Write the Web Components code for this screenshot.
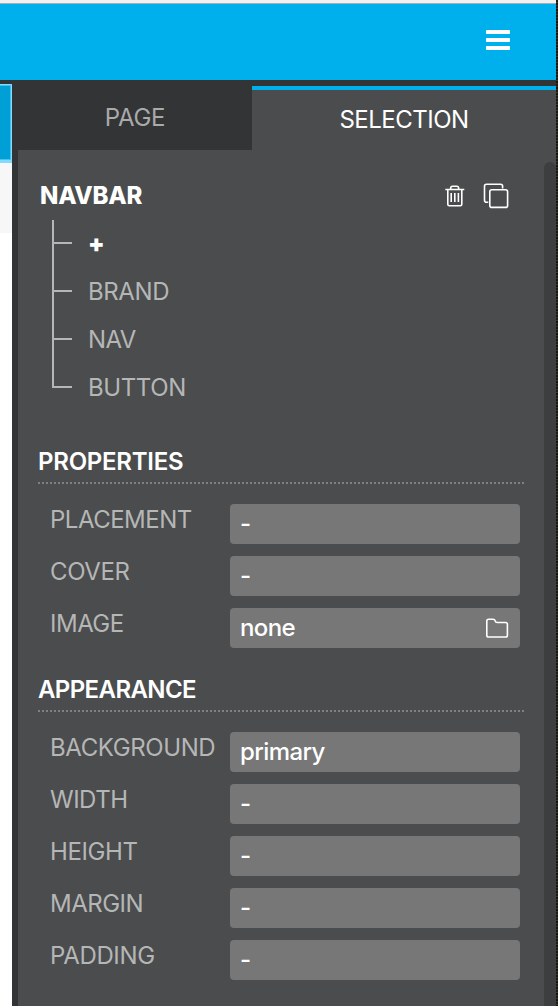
<!DOCTYPE html>
<html lang="en">
<head>
<meta charset="utf-8">
<title>Page editor</title>
<style>
html,body{margin:0;height:100%;overflow:hidden;background:#333}
body{font:24px/32px Inter,"Liberation Sans",sans-serif;color:#fff}
</style>
</head>
<body>
<editor-window>
  <top-bar slot="top"></top-bar>
  <page-canvas slot="canvas"></page-canvas>
  <inspector-panel slot="panel">
    <panel-tab slot="tabs" style="--ls:-.3px">PAGE</panel-tab>
    <panel-tab slot="tabs" active style="--ls:-.5px">SELECTION</panel-tab>
    <node-tree label="NAVBAR">
      <tree-item add>+</tree-item>
      <tree-item style="--ls:-.4px">BRAND</tree-item>
      <tree-item style="--ls:-.6px">NAV</tree-item>
      <tree-item style="--ls:-.4px">BUTTON</tree-item>
    </node-tree>
    <prop-group label="PROPERTIES" style="--hs:-.25px;--ls:-.5px">
      <prop-row label="PLACEMENT">-</prop-row>
      <prop-row label="COVER" style="--ls:-.4px">-</prop-row>
      <prop-row label="IMAGE" browse>none</prop-row>
    </prop-group>
    <prop-group label="APPEARANCE" style="--hs:-.6px;--ls:-.5px">
      <prop-row label="BACKGROUND" style="--ls:-.4px">primary</prop-row>
      <prop-row label="WIDTH">-</prop-row>
      <prop-row label="HEIGHT" style="--ls:-.4px">-</prop-row>
      <prop-row label="MARGIN">-</prop-row>
      <prop-row label="PADDING" style="--ls:-.35px">-</prop-row>
    </prop-group>
  </inspector-panel>
</editor-window>
<script>
const define = (name, html) => customElements.define(name, class extends HTMLElement {
  constructor() {
    super();
    this.attachShadow({mode: "open"}).innerHTML = html(this);
  }
});

define("editor-window", () => `<style>
:host{display:grid;grid-template:80px 926px / 556px 2px;height:1006px;width:558px;background:#333435}
.work{display:grid;grid-template-columns:12px 538px;column-gap:6px}
.edge{grid-row:1 / 3;grid-column:2;background:repeating-linear-gradient(#1c1c17 0 2px,#393820 2px 3px,#151613 3px 5px,#33331f 5px 6px)}
</style><slot name="top"></slot><div class="work"><slot name="canvas"></slot><slot name="panel"></slot></div><div class="edge"></div>`);

define("top-bar", () => `<style>
:host{display:flex;box-sizing:border-box;height:80px;background:#00b0ec;border-top:3px solid #f1f1f1;box-shadow:inset 0 1px #a5b0b4;justify-content:flex-end;padding:27px 46px 0 0}
svg{display:block}
</style><svg width="24" height="20" fill="#fff"><rect width="24" height="4" rx=".7"/><rect y="8" width="24" height="4" rx=".7"/><rect y="16" width="24" height="4" rx=".7"/></svg>`);

define("page-canvas", () => `<style>
:host{display:flex;flex-direction:column;padding-top:4px}
.sel{height:79px;box-sizing:border-box;background:#009fd6;border:solid #82dafc;border-width:1px 1px 3px 0;box-shadow:inset -1px 0 #47c2ee,inset 0 1px #47c2ee,inset 0 -1px #47c2ee}
.sub{height:70px;background:#f7f7f7}
.rest{flex:1;background:#fff}
</style><div class="sel"></div><div class="sub"></div><div class="rest"></div>`);

define("inspector-panel", () => `<style>
:host{display:flex;flex-direction:column;background:#4b4c4d}
.tabs{display:grid;grid-template-columns:234px 304px;height:70px;background:#333436}
.body{display:grid;grid-template-columns:526px 12px;flex:1}
.content{padding:26px 20px 0}
.bar{margin-top:12px;background:#3d3e40;border-radius:6px 6px 0 0}
</style><div class="tabs"><slot name="tabs"></slot></div><div class="body"><div class="content"><slot></slot></div><div class="bar"></div></div>`);

define("panel-tab", () => `<style>
:host{display:block;box-sizing:border-box;text-align:center;color:#a9aaaa;padding-top:22px;letter-spacing:var(--ls)}
:host([active]){margin-top:6px;border-top:4px solid #00b0ec;background:#4b4c4d;color:#fff;padding-top:14px}
</style><slot></slot>`);

define("node-tree", el => `<style>
:host{display:block;height:268px}
.head{display:flex;align-items:center;padding:4px 15px 0 2px;height:32px}
b{flex:1;font-weight:800;letter-spacing:-.25px}
svg{display:block;fill:none;stroke:#fff}
.trash{margin-right:17px}
.items{margin:8px 0 0 14px}
</style><div class="head"><b>${el.getAttribute("label")}</b>
<svg class="trash" width="22" height="24" viewBox="0 0 22 24" stroke-width="1.6"><path d="M1.3 5.5h19M6.7 5.2V4q0-1.8 1.8-1.8h4.3q1.8 0 1.8 1.8v1.2M3.8 6v14.2q0 1.500 1.500 1.500h11q1.500 0 1.500-1.500V6M7.200 9v9M10.800 9v9M14.400 9v9"/></svg>
<svg width="26" height="26" viewBox="0 0 26 26" stroke-width="1.6"><rect x="6.800" y="6.800" width="17.800" height="17.600" rx="2"/><path d="M19.600 5.500V3.200q0-2-2-2H3.500q-2 0-2 2v14q0 2 2 2h1.800"/></svg>
</div><div class="items"><slot></slot></div>`);

define("tree-item", () => `<style>
:host{display:grid;grid-template-columns:20px 1fr;column-gap:16px;height:48px;color:#b5b6b6;letter-spacing:var(--ls)}
.line{height:24px;box-sizing:border-box;border:solid #b5b6b6;border-width:0 0 2px 2px}
:host(:not(:last-child)) .line{height:48px;border-bottom:0;background:linear-gradient(#b5b6b6,#b5b6b6) 0 22px / 100% 2px no-repeat}
.text{padding-top:8px}
:host([add]){color:#fff;font-weight:900}
</style><div class="line"></div><div class="text"><slot></slot></div>`);

define("prop-group", el => `<style>
:host{display:block;height:228px}
h2{margin:0 0 20px;height:40px;box-sizing:border-box;border-bottom:2px dotted #808181;font:600 24px/32px Inter,sans-serif;padding-top:2px;letter-spacing:var(--hs)}
.rows{display:grid;row-gap:12px}
</style><h2>${el.getAttribute("label")}</h2><div class="rows"><slot></slot></div>`);

define("prop-row", el => `<style>
:host{display:grid;grid-template-columns:180px 290px;padding-left:12px;height:40px}
label{color:#b5b6b6;letter-spacing:var(--ls)}
.field{display:flex;align-items:center;justify-content:space-between;box-sizing:border-box;padding:0 10px;background:#777;border-radius:4px;line-height:40px;font-weight:500;letter-spacing:-.6px}
svg{display:block;fill:none;stroke:#fff;stroke-width:1.6}
</style><label>${el.getAttribute("label")}</label><div class="field"><span><slot></slot></span>${el.hasAttribute("browse") ? `<svg width="26" height="22" viewBox="0 0 26 22"><path d="M2.800 18.200V4Q2.800 2.200 4.600 2.200H9q1.800 0 2.200 1.700.3 1.600 2 1.600H21.600q1.800 0 1.800 1.800V18.200q0 1.800-1.800 1.800H4.600Q2.800 20 2.800 18.200Z"/></svg>` : ""}</div>`);
</script>
</body>
</html>
